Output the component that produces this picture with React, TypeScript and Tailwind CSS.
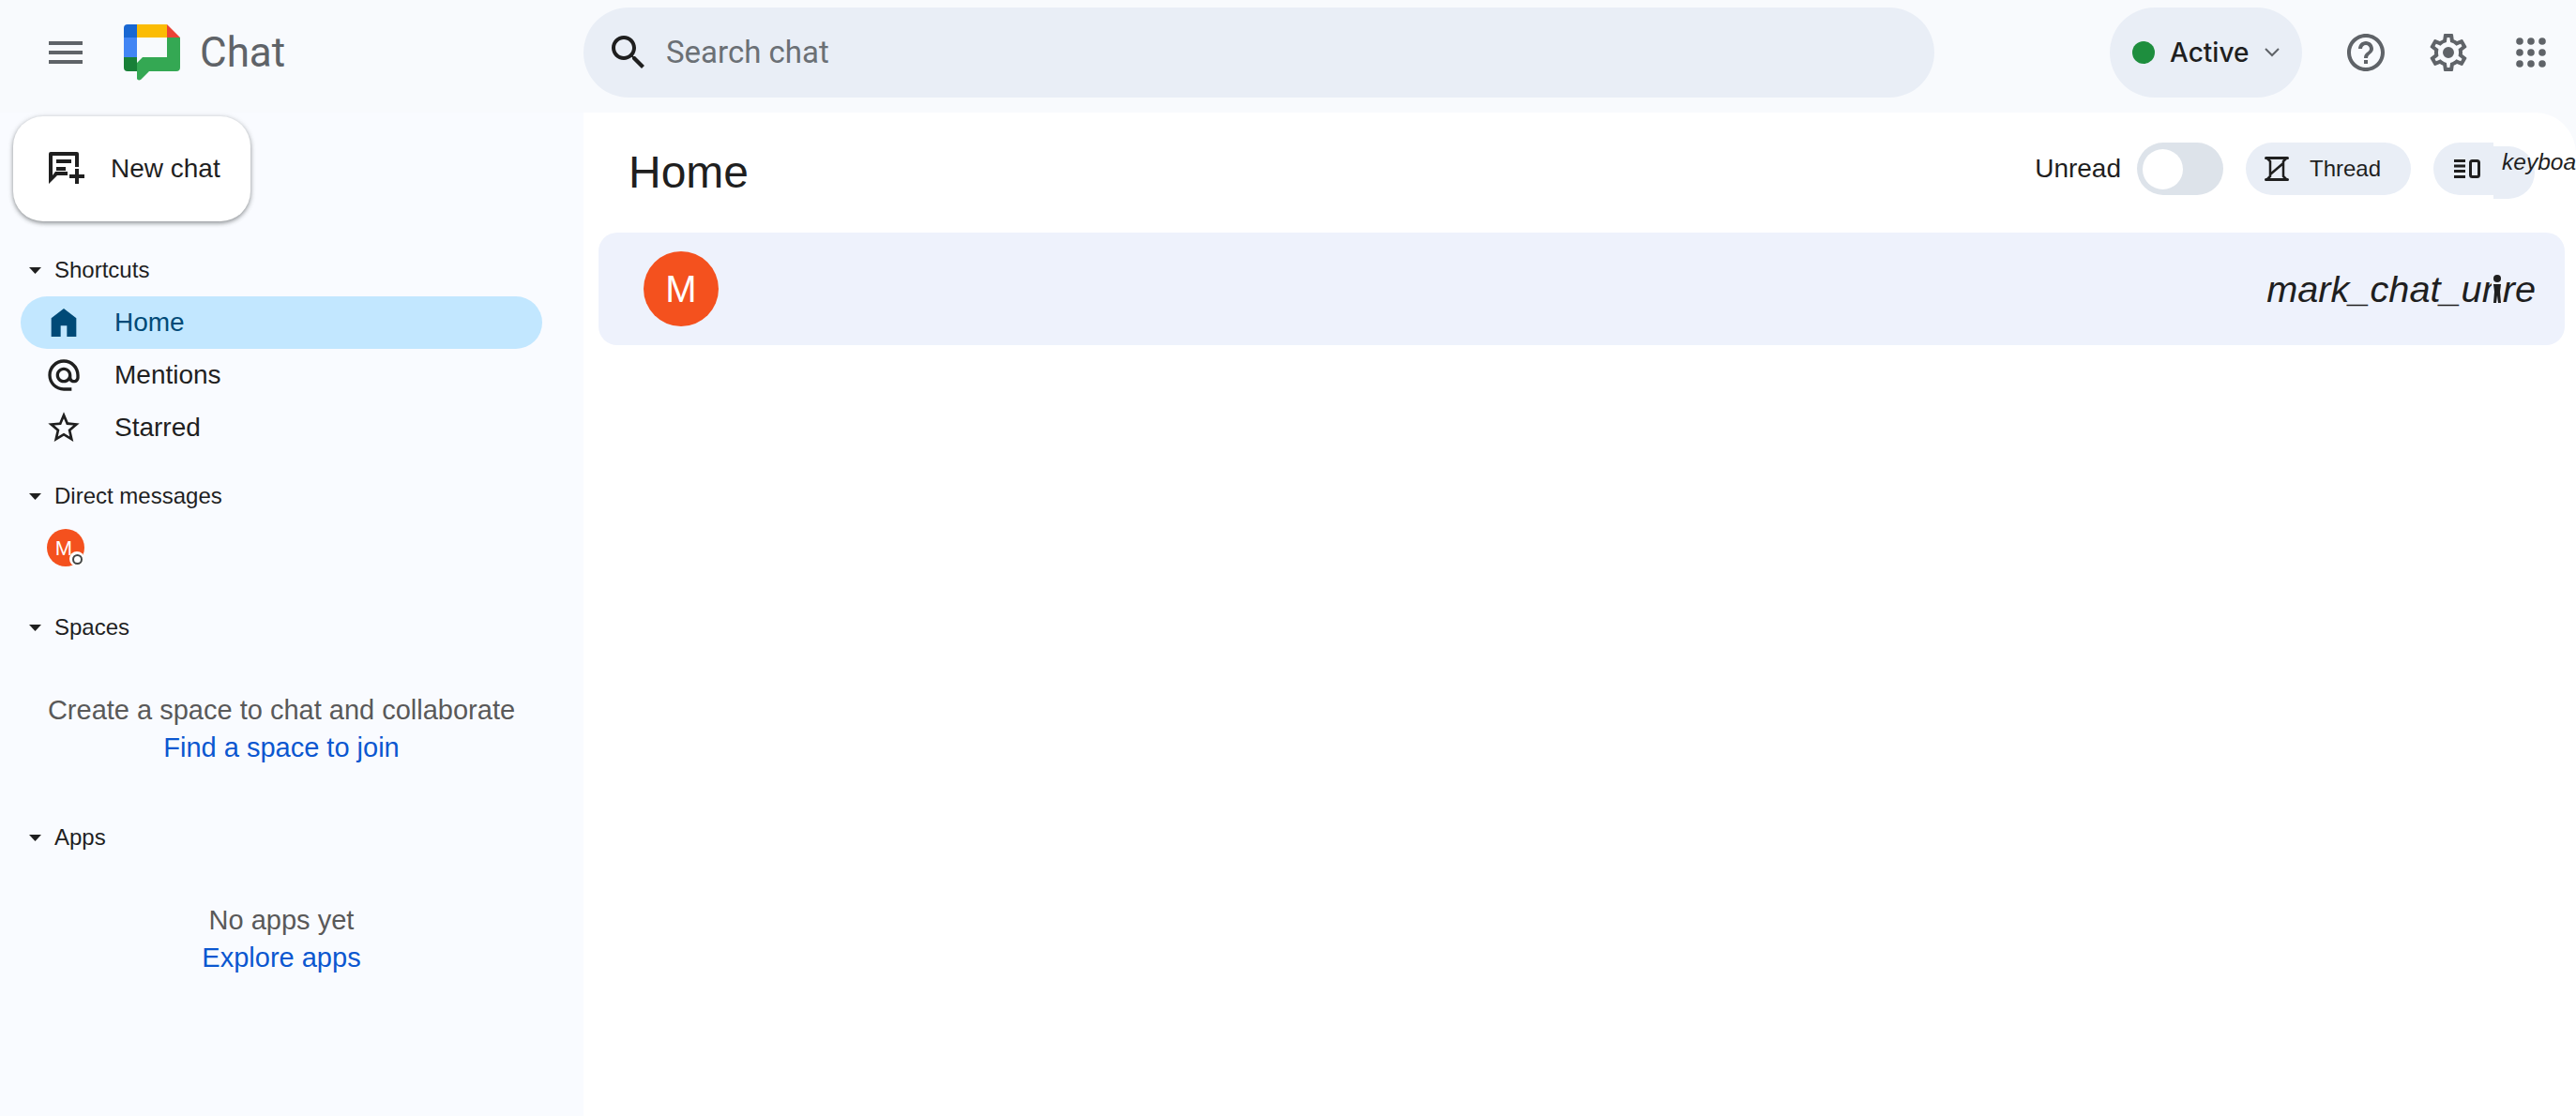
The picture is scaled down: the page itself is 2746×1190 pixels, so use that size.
import React from 'react';

const sans = "font-['Liberation_Sans',Arial,sans-serif]";

const Icon: React.FC<{ d: string; size?: number; className?: string }> = ({ d, size = 48, className }) => (
  <svg width={size} height={size} viewBox="0 0 24 24" fill="currentColor" className={className}>
    <path d={d} />
  </svg>
);

const paths = {
  menu: 'M3 18h18v-2H3v2zm0-5h18v-2H3v2zm0-7v2h18V6H3z',
  search:
    'M15.5 14h-.79l-.28-.27C15.41 12.59 16 11.11 16 9.5 16 5.91 13.09 3 9.5 3S3 5.91 3 9.5 5.91 16 9.5 16c1.61 0 3.09-.59 4.23-1.57l.27.28v.79l5 4.99L20.49 19l-4.99-5zm-6 0C7.01 14 5 11.99 5 9.5S7.01 5 9.5 5 14 7.01 14 9.5 11.99 14 9.5 14z',
  help: 'M11 18h2v-2h-2v2zm1-16C6.48 2 2 6.48 2 12s4.48 10 10 10 10-4.48 10-10S17.52 2 12 2zm0 18c-4.41 0-8-3.59-8-8s3.59-8 8-8 8 3.59 8 8-3.59 8-8 8zm0-14c-2.21 0-4 1.79-4 4h2c0-1.1.9-2 2-2s2 .9 2 2c0 2-3 1.75-3 5h2c0-2.25 3-2.5 3-5 0-2.21-1.79-4-4-4z',
  gear: 'M19.43 12.98c.04-.32.07-.64.07-.98 0-.34-.03-.66-.07-.98l2.11-1.65c.19-.15.24-.42.12-.64l-2-3.46c-.09-.16-.26-.25-.44-.25-.06 0-.12.01-.17.03l-2.49 1c-.52-.4-1.08-.73-1.69-.98l-.38-2.65C14.46 2.18 14.25 2 14 2h-4c-.25 0-.46.18-.49.42l-.38 2.65c-.61.25-1.17.59-1.69.98l-2.49-1c-.06-.02-.12-.03-.18-.03-.17 0-.34.09-.43.25l-2 3.46c-.13.22-.07.49.12.64l2.11 1.65c-.04.32-.07.65-.07.98 0 .33.03.66.07.98l-2.11 1.65c-.19.15-.24.42-.12.64l2 3.46c.09.16.26.25.44.25.06 0 .12-.01.17-.03l2.49-1c.52.4 1.08.73 1.69.98l.38 2.65c.03.24.24.42.49.42h4c.25 0 .46-.18.49-.42l.38-2.65c.61-.25 1.17-.59 1.69-.98l2.49 1c.06.02.12.03.18.03.17 0 .34-.09.43-.25l2-3.46c.12-.22.07-.49-.12-.64l-2.11-1.65zm-1.98-1.71c.04.31.05.52.05.73 0 .21-.02.43-.05.73l-.14 1.13.89.7 1.08.84-.7 1.21-1.27-.51-1.04-.42-.9.68c-.43.32-.84.56-1.25.73l-1.06.43-.16 1.13-.2 1.35h-1.4l-.19-1.35-.16-1.13-1.06-.43c-.43-.18-.83-.41-1.23-.71l-.91-.7-1.06.43-1.27.51-.7-1.21 1.08-.84.89-.7-.14-1.13c-.03-.31-.05-.54-.05-.74s.02-.43.05-.73l.14-1.13-.89-.7-1.08-.84.7-1.21 1.27.51 1.04.42.9-.68c.43-.32.84-.56 1.25-.73l1.06-.43.16-1.13.2-1.35h1.39l.19 1.35.16 1.13 1.06.43c.43.18.83.41 1.23.71l.91.7 1.06-.43 1.27-.51.7 1.21-1.07.85-.89.7.14 1.13zM12 9a3 3 0 100 6 3 3 0 000-6z',
  home: 'M4 21V9.2L12 3l8 6.2V21h-6v-7h-4v7z',
  at: 'M12 2C6.48 2 2 6.48 2 12s4.48 10 10 10h5v-2h-5c-4.34 0-8-3.66-8-8s3.66-8 8-8 8 3.66 8 8v1.43c0 .79-.71 1.57-1.5 1.57s-1.5-.78-1.5-1.57V12c0-2.76-2.24-5-5-5s-5 2.24-5 5 2.24 5 5 5c1.38 0 2.64-.56 3.54-1.47.65.89 1.77 1.47 2.96 1.47 1.97 0 3.5-1.6 3.5-3.57V12c0-5.52-4.48-10-10-10zm0 13c-1.66 0-3-1.34-3-3s1.34-3 3-3 3 1.34 3 3-1.34 3-3 3z',
  star: 'M22 9.24l-7.19-.62L12 2 9.19 8.63 2 9.24l5.46 4.73L5.82 21 12 17.27 18.18 21l-1.63-7.03L22 9.24zM12 15.4l-3.76 2.27 1-4.28-3.32-2.88 4.38-.38L12 6.1l1.71 4.04 4.38.38-3.32 2.88 1 4.28L12 15.4z',
};

const ChatLogo = () => (
  <svg width="60" height="60" viewBox="0 0 60 60">
    <path d="M0 4a4 4 0 014-4h10v14H0z" fill="#1967d2" />
    <rect x="14" width="32" height="14" fill="#fbbc04" />
    <path d="M46 0l14 14H46z" fill="#ea4335" />
    <rect y="14" width="14" height="21" fill="#4285f4" />
    <path d="M0 35h14v15H4a4 4 0 01-4-4z" fill="#188038" />
    <path d="M46 14h14v32a4 4 0 01-4 4H27l-9 9c-1.500 1-4 .5-4-1.500V41l6-6h26z" fill="#34a853" />
  </svg>
);

const NewChatIcon = () => (
  <svg width="60" height="60" viewBox="0 0 60 60" fill="#1f1f1f">
    <path d="M14 12h28a2 2 0 012 2v14h-4V16H16v21l3-4h13v4H21l-9 9V14a2 2 0 012-2z" />
    <rect x="20" y="20" width="16" height="4" />
    <rect x="20" y="28" width="10" height="4" />
    <rect x="34" y="36" width="16" height="4" />
    <rect x="40" y="30" width="4" height="16" />
  </svg>
);

const ThreadIcon = () => (
  <svg width="30" height="30" viewBox="0 0 30 30" fill="none" stroke="#1f1f1f" strokeWidth="2.500" strokeLinecap="round">
    <path d="M3.500 3.500h23M3.500 26.500h23" strokeWidth="3" />
    <path d="M5 4l3 3v16l-3 3M25 4l-3 3v16l3 3M8 21L22 9" />
  </svg>
);

const ListIcon = () => (
  <svg width="28" height="20" viewBox="0 0 28 20" fill="#1f1f1f">
    <rect width="12" height="3" />
    <rect y="5.500" width="12" height="3" />
    <rect y="11" width="12" height="3" />
    <rect y="17" width="12" height="3" />
    <rect x="17.500" y="1.500" width="9" height="17" rx="2" fill="none" stroke="#1f1f1f" strokeWidth="3" />
  </svg>
);

const AppsIcon = () => (
  <svg width="32" height="32" viewBox="0 0 32 32" fill="#5f6368">
    {[4, 16, 28].flatMap((y) => [4, 16, 28].map((x) => <circle key={`${x}-${y}`} cx={x} cy={y} r="3.800" />))}
  </svg>
);

const SectionHeader: React.FC<{ label: string; className?: string }> = ({ label, className }) => (
  <div className={`flex items-center h-10 pl-[31px] pt-[2px] text-[24px] text-[#1f1f1f] ${className ?? ''}`}>
    <svg width="13" height="7" viewBox="0 0 13 7" fill="#1f1f1f" className="mr-[14px]">
      <path d="M0 0h13L6.500 7z" />
    </svg>
    {label}
  </div>
);

const navItems = [
  { label: 'Home', icon: paths.home, active: true },
  { label: 'Mentions', icon: paths.at, active: false },
  { label: 'Starred', icon: paths.star, active: false },
];

const Sidebar = () => (
  <aside className={`w-[622px] shrink-0 bg-[#f9fbff] ${sans}`}>
    <button className="flex items-center ml-[14px] mt-1 w-[253px] h-[112px] rounded-[32px] bg-white shadow-[0_2px_4px_rgba(60,64,67,0.45),0_1px_6px_rgba(60,64,67,0.2)] pl-[26px] text-[28px] text-[#1f1f1f]">
      <NewChatIcon />
      <span className="ml-[18px]">New chat</span>
    </button>

    <SectionHeader label="Shortcuts" className="mt-[31px]" />
    <div className="mt-[9px]">
      {navItems.map((item) => (
        <div
          key={item.label}
          className={`flex items-center h-14 ml-[22px] w-[556px] rounded-full pl-[26px] text-[28px] ${
            item.active ? 'bg-[#c2e7ff] text-[#004a77]' : 'text-[#1f1f1f]'
          }`}
        >
          <Icon d={item.icon} size={40} />
          <span className="ml-[34px]">{item.label}</span>
        </div>
      ))}
    </div>

    <SectionHeader label="Direct messages" className="mt-6" />
    <div className="relative mt-4 ml-[50px] w-10 h-10 rounded-full bg-[#f4511e] flex items-center justify-center text-white text-[22px] pr-1">
      M
      <span className="absolute right-0 bottom-0 w-4 h-4 rounded-full bg-white flex items-center justify-center">
        <span className="w-[11px] h-[11px] rounded-full border-2 border-[#444746]" />
      </span>
    </div>

    <SectionHeader label="Spaces" className="mt-11" />
    <div className="mt-[49px] w-[600px] text-center text-[29px] leading-10 text-[#595959]">
      <div>Create a space to chat and collaborate</div>
      <div className="text-[#0b57d0]">Find a space to join</div>
    </div>

    <SectionHeader label="Apps" className="mt-[55px]" />
    <div className="mt-[49px] w-[600px] text-center text-[29px] leading-10 text-[#595959]">
      <div>No apps yet</div>
      <div className="text-[#0b57d0]">Explore apps</div>
    </div>
  </aside>
);

const Header = () => (
  <header className="flex items-center h-[120px] shrink-0 pb-2 bg-[#f8fafd]">
    <div className="flex items-center w-[622px] shrink-0 pl-[46px]">
      <Icon d={paths.menu} className="text-[#5f6368]" />
      <div className="ml-[38px] flex">
        <ChatLogo />
      </div>
      <span className="ml-[21px] text-[44px] text-[#5f6368] font-['Roboto',sans-serif]">Chat</span>
    </div>
    <div className="flex items-center w-[1440px] h-24 rounded-full bg-[#e9eef6] pl-[24px] text-[#1f1f1f]">
      <Icon d={paths.search} />
      <span className="ml-[16px] text-[33px] text-[#6b7075] font-['Roboto',sans-serif]">Search chat</span>
    </div>
    <div className="ml-auto flex items-center h-24 w-[205px] rounded-full bg-[#e9eef6] pl-[24px] font-['Inter',sans-serif]">
      <span className="w-6 h-6 rounded-full bg-[#1e8e3e]" />
      <span className="ml-4 text-[28px] font-medium text-[#1f1f1f]">Active</span>
      <svg width="16" height="10" viewBox="0 0 16 10" fill="none" stroke="#5f6368" strokeWidth="2" className="ml-[17px]">
        <path d="M1 1l7 7 7-7" />
      </svg>
    </div>
    <div className="flex ml-[24px] mr-1">
      <span className="flex items-center justify-center w-[88px] text-[#5f6368]">
        <Icon d={paths.help} />
      </span>
      <span className="flex items-center justify-center w-[88px] text-[#5f6368]">
        <Icon d={paths.gear} />
      </span>
      <span className="flex items-center justify-center w-[88px]">
        <AppsIcon />
      </span>
    </div>
  </header>
);

const Main = () => (
  <main className={`flex-1 min-w-0 bg-white rounded-tr-[44px] overflow-hidden ${sans} text-[#1f1f1f]`}>
    <div className="flex items-center justify-between h-[128px] pl-[48px] pr-[44px]">
      <h1 className="text-[48px] leading-none">Home</h1>
      <div className="flex items-start h-[56px] mb-[8px]">
        <span className="text-[28px] leading-[56px]">Unread</span>
        <div className="ml-[17px] w-[92px] h-14 rounded-full bg-[#dde3ea] flex items-center pl-[6px]">
          <span className="w-[43px] h-[43px] rounded-full bg-white" />
        </div>
        <div className="ml-6 flex items-center w-[176px] h-14 rounded-full bg-[#e9eef6] pl-[18px] text-[24px]">
          <ThreadIcon />
          <span className="ml-[20px]">Thread</span>
        </div>
        <div className="ml-6 flex items-center w-[64px] h-14 rounded-l-full bg-[#e9eef6] pl-[22px]">
          <ListIcon />
        </div>
        <div className="mt-1 w-[44px] h-14 rounded-r-full bg-[#e9eef6] pl-[9px] text-[24.500px] italic leading-[26px] pt-1 whitespace-nowrap">
          keyboard_arrow_down
        </div>
      </div>
    </div>
    <div className="relative flex items-center justify-between h-[120px] ml-4 mr-3 rounded-[20px] bg-[#eef2fc] pl-12 pr-[31px]">
      <div className="w-20 h-20 rounded-full bg-[#f4511e] flex items-center justify-center text-white text-[40px]">M</div>
      <span className="pt-[2px] text-[39.700px] italic whitespace-nowrap">mark_chat_unre</span>
      <svg width="12" height="32" viewBox="0 0 12 32" className="absolute right-[66px] top-[45px]" fill="#1f1f1f">
        <rect x="0" y="8" width="12" height="24" fill="#eef2fc" />
        <circle cx="6" cy="4" r="4" />
        <path d="M2 10h8l-1 8 1 12H7l-1-8-1 8H2l1-12z" />
      </svg>
    </div>
  </main>
);

export default function App() {
  return (
    <div className="flex flex-col w-screen h-screen overflow-hidden bg-[#f8fafd]">
      <Header />
      <div className="flex flex-1 min-h-0">
        <Sidebar />
        <Main />
      </div>
    </div>
  );
}
